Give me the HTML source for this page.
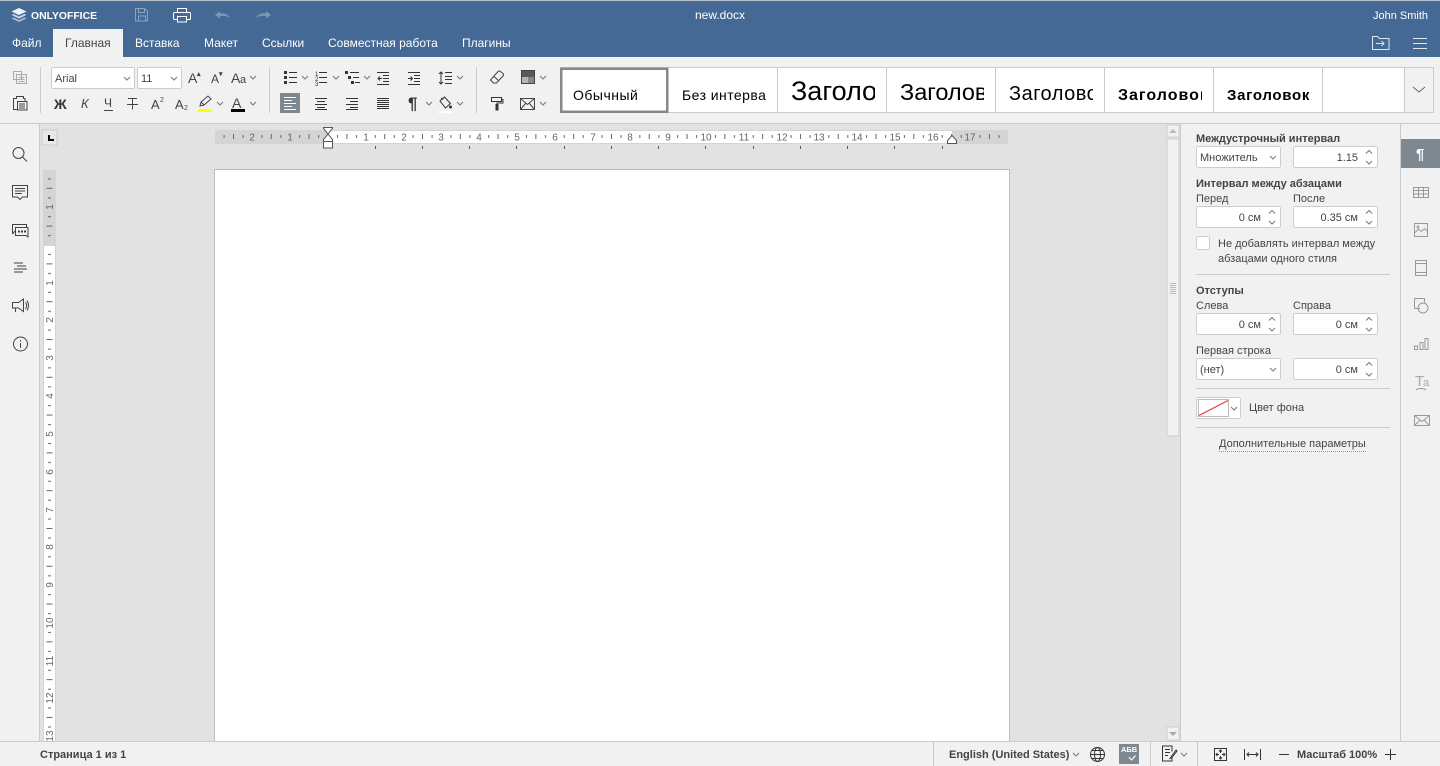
<!DOCTYPE html>
<html lang="ru"><head><meta charset="utf-8"><title>new.docx</title>
<style>
html,body{margin:0;padding:0;width:1440px;height:766px;overflow:hidden;background:#f1f1f1}
svg{display:block;position:absolute;left:0;top:0}
text{font-family:"Liberation Sans","Noto Sans CJK SC",sans-serif;font-size:11px;fill:#444}
.b{font-weight:bold}
.ru text{font-size:10px;fill:#666}
.i{fill:none;stroke:#444;stroke-width:1}
.c{fill:none;stroke:#777;stroke-width:1}
.in{fill:#fff;stroke:#cfcbcb}
.m text{font-size:12px;fill:#fff}
.st text{font-size:14px;fill:#000}
.ri{fill:none;stroke:#999;stroke-width:1}
.l{stroke:#cbcbcb;stroke-width:1}
</style></head><body>
<svg width="1440" height="766" viewBox="0 0 1440 766" xmlns="http://www.w3.org/2000/svg">
<defs>
<pattern id="th" patternUnits="userSpaceOnUse" x="328" y="130" width="37.795" height="14">
<rect x="9" y="5" width="1" height="3" fill="#666"/><rect x="18.400" y="4" width="1" height="5" fill="#666"/><rect x="28" y="5" width="1" height="3" fill="#666"/>
</pattern>
<pattern id="tv" patternUnits="userSpaceOnUse" x="43" y="245" width="13" height="37.795">
<rect x="5" y="9" width="3" height="1" fill="#666"/><rect x="3.500" y="18.400" width="6" height="1" fill="#666"/><rect x="5" y="28" width="3" height="1" fill="#666"/>
</pattern>
<clipPath id="s1"><rect x="791" y="68" width="84" height="44"/></clipPath>
<clipPath id="s2"><rect x="900" y="68" width="84" height="44"/></clipPath>
<clipPath id="s3"><rect x="1009" y="68" width="84" height="44"/></clipPath>
<clipPath id="s4"><rect x="1118" y="68" width="84" height="44"/></clipPath>
<clipPath id="s5"><rect x="1227" y="68" width="84" height="44"/></clipPath>
</defs>

<!-- frame -->
<g shape-rendering="crispEdges">
<rect width="1440" height="766" fill="#f1f1f1"/>
<rect y="0" width="1440" height="57" fill="#446995"/>
<rect y="0" width="1440" height="1" fill="#b9c1cc"/>
<rect x="53" y="29" width="70" height="28" fill="#f1f1f1"/>
<rect x="40" y="124" width="1140" height="617" fill="#e2e2e2"/>
<rect y="123" width="1440" height="1" fill="#cbcbcb"/>
<rect x="39" y="124" width="1" height="617" fill="#cbcbcb"/>
<rect x="1180" y="124" width="1" height="617" fill="#cbcbcb"/>
<rect x="1400" y="124" width="1" height="617" fill="#cbcbcb"/>
<rect y="741" width="1440" height="1" fill="#cbcbcb"/>
<!-- page -->
<rect x="214" y="169" width="796" height="572" fill="#bdbdc2"/>
<rect x="215" y="170" width="794" height="571" fill="#fff"/>
<!-- scroll bar -->
<rect x="1166" y="124" width="14" height="617" fill="#e2e2e2"/>
<rect x="1167" y="125" width="12" height="12" fill="#f1f1f1" stroke="#cfcfcf"/>
<rect x="1167" y="139" width="12" height="297" fill="#f1f1f1" stroke="#cfcfcf"/>
<rect x="1167" y="727" width="12" height="13" fill="#f1f1f1" stroke="#cfcfcf"/>
<rect x="1170" y="283" width="6" height="1" fill="#bbb"/><rect x="1170" y="285" width="6" height="1" fill="#bbb"/><rect x="1170" y="287" width="6" height="1" fill="#bbb"/><rect x="1170" y="289" width="6" height="1" fill="#bbb"/><rect x="1170" y="291" width="6" height="1" fill="#bbb"/><rect x="1170" y="293" width="6" height="1" fill="#bbb"/>
<!-- rulers -->
<rect x="42" y="130" width="15" height="15" fill="#e8e8e8" stroke="#cbcbcb"/>
<rect x="48" y="135" width="2" height="6" fill="#000"/><rect x="48" y="139" width="6" height="2" fill="#000"/>
<rect x="215" y="130" width="793" height="14" fill="#d4d4d4"/>
<rect x="328" y="131" width="624" height="12" fill="#fff"/>
<rect x="216" y="130" width="791" height="14" fill="url(#th)"/>
<rect x="43" y="170" width="13" height="571" fill="#d4d4d4"/>
<rect x="44" y="246" width="11" height="495" fill="#fff"/>
<rect x="43" y="171" width="13" height="570" fill="url(#tv)"/>
<rect x="375" y="146" width="1" height="3" fill="#555"/><rect x="422" y="146" width="1" height="3" fill="#555"/><rect x="469" y="146" width="1" height="3" fill="#555"/><rect x="516" y="146" width="1" height="3" fill="#555"/><rect x="564" y="146" width="1" height="3" fill="#555"/><rect x="611" y="146" width="1" height="3" fill="#555"/><rect x="658" y="146" width="1" height="3" fill="#555"/><rect x="705" y="146" width="1" height="3" fill="#555"/><rect x="753" y="146" width="1" height="3" fill="#555"/><rect x="800" y="146" width="1" height="3" fill="#555"/><rect x="847" y="146" width="1" height="3" fill="#555"/><rect x="894" y="146" width="1" height="3" fill="#555"/><rect x="942" y="146" width="1" height="3" fill="#555"/>
</g>
<g class="ru" text-anchor="middle">
<text x="252" y="140.500">2</text><text x="290" y="140.500">1</text><text x="366" y="140.500">1</text><text x="404" y="140.500">2</text><text x="441" y="140.500">3</text><text x="479" y="140.500">4</text><text x="517" y="140.500">5</text><text x="555" y="140.500">6</text><text x="593" y="140.500">7</text><text x="630" y="140.500">8</text><text x="668" y="140.500">9</text><text x="706" y="140.500">10</text><text x="744" y="140.500">11</text><text x="782" y="140.500">12</text><text x="819" y="140.500">13</text><text x="857" y="140.500">14</text><text x="895" y="140.500">15</text><text x="933" y="140.500">16</text><text x="970" y="140.500">17</text>
<text transform="translate(53,207) rotate(-90)">1</text>
<text transform="translate(53,283) rotate(-90)">1</text><text transform="translate(53,320) rotate(-90)">2</text><text transform="translate(53,358) rotate(-90)">3</text><text transform="translate(53,396) rotate(-90)">4</text><text transform="translate(53,434) rotate(-90)">5</text><text transform="translate(53,472) rotate(-90)">6</text><text transform="translate(53,510) rotate(-90)">7</text><text transform="translate(53,547) rotate(-90)">8</text><text transform="translate(53,585) rotate(-90)">9</text><text transform="translate(53,623) rotate(-90)">10</text><text transform="translate(53,661) rotate(-90)">11</text><text transform="translate(53,698) rotate(-90)">12</text><text transform="translate(53,736) rotate(-90)">13</text>
</g>
<path d="M323.500 127.500h9v1l-4.500 5.500 4.500 5.500v2h-9v-2l4.500-5.500-4.500-5.500z" fill="#fff" stroke="#555"/>
<rect x="323.500" y="141.500" width="9" height="6.500" fill="#fff" stroke="#555"/>
<path d="M947.500 143.500v-3l4.500-5 4.500 5v3z" fill="#fff" stroke="#555"/>

<!-- header -->
<g fill="#fff" opacity=".92">
<path d="M19 8l7.500 3.500-7.500 3.500-7.500-3.500z"/>
<path d="M11.500 15l7.500 3.500 7.500-3.500-2-1-5.500 2.500-5.500-2.500z" opacity=".8"/>
<path d="M11.500 18.500l7.500 3.500 7.500-3.500-2-1-5.500 2.500-5.500-2.500z" opacity=".6"/>
</g>
<text class="b" x="31" y="19" style="font-size:10.400px;fill:#fff">ONLYOFFICE</text>
<g fill="none" stroke="#8ba3bf">
<path d="M135.500 8.500h9l3 3v9.500h-12zM138.500 8.500v4h6v-4M138.500 21v-5h7v5"/>
</g>
<path d="M215 15l5-4v2.500c4-.8 8 .5 10 4.500-2.500-2-5.500-2.500-10-2v2.500z" fill="#7c97b6"/>
<path d="M271 15l-5-4v2.500c-4-.8-8 .5-10 4.500 2.500-2 5.500-2.500 10-2v2.500z" fill="#7c97b6"/>
<path d="M177.500 12.500v-4h9v4M177.500 19.500h-3a1 1 0 0 1-1-1v-5a1 1 0 0 1 1-1h15a1 1 0 0 1 1 1v5a1 1 0 0 1-1 1h-3M177.500 16.500h9v5.500h-9z" fill="none" stroke="#fff"/>
<text x="720" y="19" text-anchor="middle" style="font-size:12px;fill:#fff">new.docx</text>
<text x="1428" y="19" text-anchor="end" style="font-size:11px;fill:#fff">John Smith</text>
<g class="m">
<text x="12" y="47">Файл</text>
<text x="65" y="47" style="fill:#444">Главная</text>
<text x="135" y="47">Вставка</text>
<text x="204" y="47">Макет</text>
<text x="262" y="47">Ссылки</text>
<text x="328" y="47">Совместная работа</text>
<text x="462" y="47">Плагины</text>
</g>
<path d="M1372.500 49.500v-13h5l2 2h9.500v11zM1376 43.500h8M1381.500 41l2.500 2.500-2.500 2.500" fill="none" stroke="#dfe6ee"/>
<path d="M1413 38.500h14M1413 43.500h14M1413 48.500h14" stroke="#dfe6ee" fill="none"/>

<!-- toolbar separators -->
<g class="l" shape-rendering="crispEdges"><path d="M40.500 67v46M269.500 67v46M476.500 67v46"/></g>

<!-- clipboard -->
<path d="M13.500 71.500h8v8h-8zM16.500 74.500h10v9h-10zM18.500 77.500h6M18.500 79.500h6M18.500 81.500h6" fill="#f1f1f1" stroke="#aaa"/>
<path d="M13.500 98.500h3v-2h7v2h1.500v11h-11.500z" fill="none" stroke="#444"/>
<path d="M17.500 101.500h9.500v8.500h-9.500z" fill="#f1f1f1" stroke="#444"/>
<path d="M19 104h6M19 106h6M19 108h6" stroke="#444" fill="none"/>

<!-- font combos -->
<g shape-rendering="crispEdges"><rect class="in" x="51.500" y="67.500" width="83" height="21" rx="2"/><rect class="in" x="137.500" y="67.500" width="44" height="21" rx="2"/></g>
<text x="55" y="82">Arial</text>
<text x="141" y="82">11</text>
<g class="c"><path d="M124 77l3 3 3-3M171 77l3 3 3-3M250 76l3 3 3-3M217 102l3 3 3-3M250 102l3 3 3-3"/></g>
<g style="font-size:14px">
<text x="188" y="83" style="font-size:14px">A</text><text x="197" y="76" class="b" style="font-size:7px">▴</text>
<text x="211" y="83" style="font-size:12px">A</text><text x="219" y="76" class="b" style="font-size:7px">▾</text>
<text x="231" y="83" style="font-size:14px">A</text><text x="240" y="83" style="font-size:11px">a</text>
<text x="54" y="109" class="b" style="font-size:14px;fill:#333">Ж</text>
<text x="81" y="108" style="font-size:13px;font-style:italic">К</text>
<text x="104" y="107" style="font-size:12px">Ч</text><path d="M104 110.500h9" stroke="#444"/>
<path d="M128 98.500h9M132.500 98.500v11M127 104.500h11" stroke="#444" fill="none"/>
<text x="151" y="109" style="font-size:13px">A</text><text x="160" y="102" style="font-size:7px">2</text>
<text x="175" y="109" style="font-size:13px">A</text><text x="184" y="110" style="font-size:7px">2</text>
</g>
<path d="M200 106l1-4 7-6 3 3-7 6zM201 102l3 3" fill="none" stroke="#444"/>
<rect x="198" y="109" width="14" height="3" fill="#ff0" shape-rendering="crispEdges"/>
<text x="232" y="108" style="font-size:14px">A</text>
<rect x="231" y="109" width="14" height="3" fill="#000" shape-rendering="crispEdges"/>

<!-- list icons -->
<g fill="#333" shape-rendering="crispEdges">
<rect x="284" y="71" width="3" height="3"/><rect x="284" y="76" width="3" height="3"/><rect x="284" y="81" width="3" height="3"/>
<rect x="289" y="72" width="8" height="1"/><rect x="289" y="77" width="8" height="1"/><rect x="289" y="82" width="8" height="1"/>
<rect x="319" y="72" width="8" height="1"/><rect x="319" y="77" width="8" height="1"/><rect x="319" y="82" width="8" height="1"/>
<rect x="345" y="71" width="3" height="3"/><rect x="348" y="76" width="3" height="3"/><rect x="351" y="81" width="3" height="3"/>
<rect x="350" y="72" width="9" height="1"/><rect x="353" y="77" width="6" height="1"/><rect x="355" y="82" width="5" height="1"/>
<rect x="377" y="72" width="12" height="1"/><rect x="383" y="75" width="6" height="1"/><rect x="383" y="78" width="6" height="1"/><rect x="383" y="81" width="6" height="1"/><rect x="377" y="84" width="12" height="1"/>
<rect x="408" y="72" width="12" height="1"/><rect x="414" y="75" width="6" height="1"/><rect x="414" y="78" width="6" height="1"/><rect x="414" y="81" width="6" height="1"/><rect x="408" y="84" width="12" height="1"/>
<rect x="445" y="72" width="7" height="1"/><rect x="445" y="76" width="7" height="1"/><rect x="445" y="79" width="7" height="1"/><rect x="445" y="83" width="7" height="1"/>
<rect x="280" y="93" width="20" height="20" fill="#7e8890"/>
<g fill="#fff"><rect x="284" y="97" width="12" height="1"/><rect x="284" y="100" width="8" height="1"/><rect x="284" y="103" width="12" height="1"/><rect x="284" y="106" width="8" height="1"/><rect x="284" y="109" width="12" height="1"/></g>
<rect x="315" y="98" width="12" height="1"/><rect x="317" y="101" width="8" height="1"/><rect x="315" y="104" width="12" height="1"/><rect x="317" y="107" width="8" height="1"/><rect x="315" y="109" width="12" height="1"/>
<rect x="346" y="98" width="12" height="1"/><rect x="350" y="101" width="8" height="1"/><rect x="346" y="104" width="12" height="1"/><rect x="350" y="107" width="8" height="1"/><rect x="346" y="109" width="12" height="1"/>
<rect x="377" y="98" width="12" height="1"/><rect x="377" y="100" width="12" height="1"/><rect x="377" y="102" width="12" height="1"/><rect x="377" y="104" width="12" height="1"/><rect x="377" y="106" width="12" height="1"/><rect x="377" y="108" width="12" height="1"/>
</g>
<g style="font-size:6px"><text x="315" y="76" style="font-size:6px;fill:#333">1</text><text x="315" y="81" style="font-size:6px;fill:#333">2</text><text x="315" y="86" style="font-size:6px;fill:#333">3</text></g>
<path d="M382 78.500h-4M380 76.500l-2 2 2 2M408 78.500h4.500M410.500 76.500l2 2-2 2M441 72v12M439 74l2-2 2 2M439 82l2 2 2-2" fill="none" stroke="#333"/>
<text x="408" y="109" class="b" style="font-size:17px;fill:#333">¶</text>
<path d="M440 101l4.500-4 6 6.500-5 4.500zM441 98l2 1.500" fill="none" stroke="#333"/><circle cx="450.500" cy="107" r="1.500" fill="#333"/>
<rect x="438" y="111" width="14" height="2" fill="#fff" shape-rendering="crispEdges"/>
<g class="c"><path d="M302 76l3 3 3-3M333 76l3 3 3-3M364 76l3 3 3-3M457 76l3 3 3-3M426 102l3 3 3-3M457 102l3 3 3-3M540 76l3 3 3-3M540 102l3 3 3-3"/></g>

<!-- eraser, colour, roller, mail -->
<path d="M490.500 80l7.500-8.500a2 2 0 0 1 2.500 0l2.500 2a2 2 0 0 1 0 2.500l-6.500 7h-3zM494 76.500l5 4.500" fill="none" stroke="#444"/>
<rect x="521.500" y="70.500" width="13" height="13" fill="#fff" stroke="#444" shape-rendering="crispEdges"/>
<rect x="522" y="71" width="12" height="6" fill="#5a5a5a" shape-rendering="crispEdges"/><rect x="522" y="77" width="6" height="6" fill="#b5b5b5" shape-rendering="crispEdges"/><rect x="528" y="77" width="6" height="6" fill="#888" shape-rendering="crispEdges"/>
<path d="M491.500 97.500h10v4h-10zM501.500 99.500h1.500v3.500h-6v2" fill="none" stroke="#333"/><rect x="495.500" y="104" width="3" height="6.500" fill="#333"/>
<path d="M520.500 98.500h14v11h-14zM520.500 98.500l7 6 7-6M520.500 109.500l5-6M534.500 109.500l-5-6" fill="none" stroke="#444"/>

<!-- style gallery -->
<g shape-rendering="crispEdges">
<rect x="560.500" y="67.500" width="873" height="45" fill="#fff" stroke="#cfcbcb"/>
<path class="l" d="M777.500 68v44M886.500 68v44M995.500 68v44M1104.500 68v44M1213.500 68v44M1322.500 68v44M1404.500 68v44"/>
<rect x="1405" y="68" width="28" height="44" fill="#f1f1f1"/>
<rect x="561" y="68.500" width="106" height="43" fill="#fff" stroke="#888" stroke-width="2.500"/>
</g>
<path d="M1413 87l6 5 6-5" fill="none" stroke="#666"/>
<g class="st">
<text x="573" y="100" style="letter-spacing:.5px">Обычный</text>
<text x="682" y="100" style="letter-spacing:.45px">Без интерва</text>
<text x="791" y="100" clip-path="url(#s1)" style="font-size:27px">Заголовок 1</text>
<text x="900" y="100" clip-path="url(#s2)" style="font-size:23.500px">Заголовок 2</text>
<text x="1009" y="100" clip-path="url(#s3)" style="font-size:20px;letter-spacing:.5px">Заголовок 3</text>
<text x="1118" y="100" clip-path="url(#s4)" class="b" style="font-size:16px;letter-spacing:1px">Заголовок 4</text>
<text x="1227" y="100" clip-path="url(#s5)" class="b" style="font-size:15px;letter-spacing:.7px">Заголовок</text>
</g>

<!-- left bar icons -->
<g class="i">
<circle cx="18.500" cy="153" r="5.500"/><path d="M22.500 157l4.500 4.500"/>
<path d="M12.500 185.500h15v11.500h-5l-2.500 2.500-2.500-2.500h-5zM15 188.500h10M15 191h10M15 193.500h7"/>
<path d="M12.500 234v-9.500h14v2.500M12.500 234l2.500-3M15.500 227.500h12.500v9.500l-2-1.500h-10.500z"/>
<path d="M18 231.500h2M21 231.500h2M24 231.500h2" stroke-width="2"/>
<path d="M14 263.500h9M17 266.500h9M14 269.500h13M14 272.500h9" transform="translate(0,-.5)"/>
<path d="M12.500 302.500h6l5-3.500v12.500l-5-3.500h-6zM15.500 308v4M25.500 302c1.500 2 1.500 5 0 7M27 300.500c2 3 2 7 0 10" />
<circle cx="20.500" cy="344" r="7"/><path d="M20.500 343v5M20.500 340v1.500"/>
</g>

<!-- right panel -->
<text class="b" x="1196" y="142">Междустрочный интервал</text>
<g shape-rendering="crispEdges" class="in">
<rect x="1196.500" y="146.500" width="84" height="21" rx="2"/><rect x="1293.500" y="146.500" width="84" height="21" rx="2"/>
<rect x="1196.500" y="206.500" width="84" height="21" rx="2"/><rect x="1293.500" y="206.500" width="84" height="21" rx="2"/>
<rect x="1196.500" y="236.500" width="13" height="13" rx="2"/>
<rect x="1196.500" y="313.500" width="84" height="21" rx="2"/><rect x="1293.500" y="313.500" width="84" height="21" rx="2"/>
<rect x="1196.500" y="358.500" width="84" height="21" rx="2"/><rect x="1293.500" y="358.500" width="84" height="21" rx="2"/>
<rect x="1196.500" y="397.500" width="44" height="21" rx="2"/>
</g>
<text x="1200" y="161">Множитель</text>
<text x="1358" y="161" text-anchor="end">1.15</text>
<text class="b" x="1196" y="187">Интервал между абзацами</text>
<text x="1196" y="202">Перед</text><text x="1293" y="202">После</text>
<text x="1261" y="221" text-anchor="end">0 см</text><text x="1358" y="221" text-anchor="end">0.35 см</text>
<text x="1218" y="247">Не добавлять интервал между</text>
<text x="1218" y="262">абзацами одного стиля</text>
<text class="b" x="1196" y="294">Отступы</text>
<text x="1196" y="309">Слева</text><text x="1293" y="309">Справа</text>
<text x="1261" y="328" text-anchor="end">0 см</text><text x="1358" y="328" text-anchor="end">0 см</text>
<text x="1196" y="354">Первая строка</text>
<text x="1200" y="373">(нет)</text><text x="1358" y="373" text-anchor="end">0 см</text>
<text x="1249" y="411">Цвет фона</text>
<text x="1219" y="447">Дополнительные параметры</text>
<path d="M1219 451.500h147" stroke="#999" stroke-dasharray="1 1"/>
<g class="l" shape-rendering="crispEdges"><path d="M1196 274.500h194M1196 388.500h194M1196 427.500h194"/></g>
<g class="c">
<path d="M1270 156l3 3 3-3M1270 368l3 3 3-3M1231 407l3 3 3-3"/>
<path d="M1366 153.500l3-3 3 3M1366 161l3 3 3-3M1269 213.500l3-3 3 3M1269 221l3 3 3-3M1366 213.500l3-3 3 3M1366 221l3 3 3-3M1269 320.500l3-3 3 3M1269 328l3 3 3-3M1366 320.500l3-3 3 3M1366 328l3 3 3-3M1366 365.500l3-3 3 3M1366 373l3 3 3-3"/>
</g>
<rect x="1198.500" y="399.500" width="30" height="17" fill="#fff" stroke="#bbb" shape-rendering="crispEdges"/>
<path d="M1199 415.500l29-15" stroke="#f0333f" stroke-width="1.200"/>

<!-- right tabs -->
<rect x="1401" y="139" width="39" height="29" fill="#7e8890" shape-rendering="crispEdges"/>
<text x="1416" y="159" class="b" style="font-size:15px;fill:#fff">¶</text>
<g class="ri">
<path d="M1413.500 187.500h15v10h-15zM1413.500 190.500h15M1413.500 194h15M1418.500 187.500v10M1423.500 187.500v10" shape-rendering="crispEdges"/>
<path d="M1414.500 223.500h13v13h-13zM1414.500 233l4-4 3 2.500 3-3 3 3"/><circle cx="1418" cy="227" r="1"/>
<path d="M1415.500 260.500h11v15h-11zM1415.500 263.500h11M1415.500 272.500h11" shape-rendering="crispEdges"/>
<path d="M1420 308.500h-5.500v-10h10v4"/><circle cx="1423" cy="308" r="5"/>
<path d="M1414.500 349.500v-3.500h3v3.500zM1420 349.500v-7h3v7zM1425 349.500v-11h3v11z" shape-rendering="crispEdges"/>
<path d="M1414.500 415.500h15v10h-15zM1414.500 415.500l7.500 6 7.500-6M1414.500 425.500l5.500-5.500M1429.500 425.500l-5.500-5.500" />
<path d="M1416 390c2-2 8-2 10 0"/>
</g>
<text x="1415" y="386" style="font-size:15px;fill:#aaa">T</text><text x="1423" y="386" style="font-size:11px;fill:#aaa">a</text>

<!-- scroll arrows -->
<path d="M1169 133l4-4 4 4z" fill="#bbb"/>
<path d="M1169 732l4 4 4-4z" fill="#aaa"/>

<!-- status bar -->
<g class="l" shape-rendering="crispEdges"><path d="M933.500 742v24M1150.500 742v24M1197.500 742v24"/></g>
<text class="b" x="40" y="758">Страница 1 из 1</text>
<text class="b" x="949" y="758">English (United States)</text>
<path d="M1073 753l3 3 3-3M1181 753l3 3 3-3" class="c"/>
<g class="i" style="stroke:#333"><circle cx="1097.500" cy="754.500" r="7"/><ellipse cx="1097.500" cy="754.500" rx="3" ry="7"/><path d="M1090.500 754.500h14M1092 750.500h11M1092 758.500h11"/></g>
<rect x="1119" y="744" width="20" height="20" fill="#7e8890" shape-rendering="crispEdges"/>
<text x="1121" y="752" class="b" style="font-size:7.500px;fill:#fff">АБВ</text>
<path d="M1129 757l2.500 3 4-4.500" fill="none" stroke="#fff" stroke-width="1.200"/>
<path d="M1172 751.500v-5.500h-9.500v15h9.500v-3M1165 749.500h5M1165 752.500h5M1165 755.500h3M1171 757l-1 1.500 1.500-.5 5.500-7-1-1z" fill="none" stroke="#333"/>
<g fill="none" stroke="#333">
<path d="M1214.500 748.500h12v12h-12z" shape-rendering="crispEdges"/>
<path d="M1220.500 750.500v2.500M1220.500 756v2.500M1216.500 754.500h2.500M1222 754.500h2.500M1219 751.500l1.500-1.500 1.500 1.500M1219 757.500l1.500 1.500 1.500-1.500M1217.500 753l-1.500 1.500 1.500 1.500M1223.500 753l1.500 1.500-1.500 1.500"/>
<path d="M1244.500 749v11M1260.500 749v11M1247 754.500h11M1249 752.500l-2 2 2 2M1256 752.500l2 2-2 2"/>
<path d="M1279 754.500h10M1385 754.500h11M1390.500 749v11"/>
</g>
<text class="b" x="1297" y="758">Масштаб 100%</text>
</svg>
</body></html>
